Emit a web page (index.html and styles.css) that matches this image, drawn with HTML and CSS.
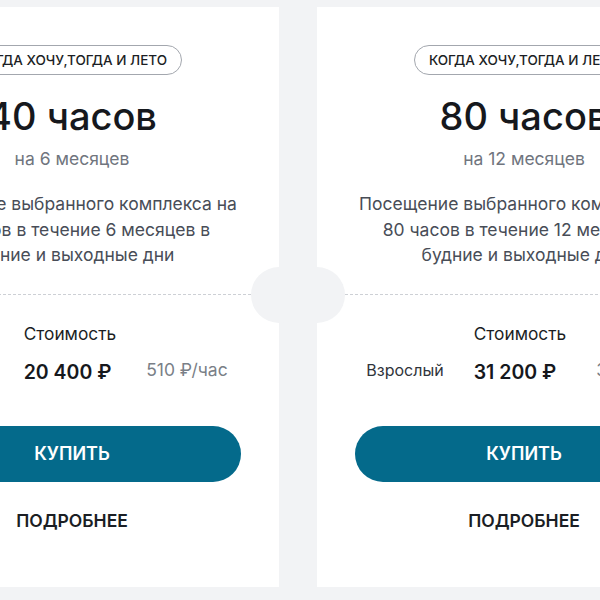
FILE: index.html
```html
<!DOCTYPE html>
<html lang="ru">
<head>
    <meta charset="UTF-8">
    <meta name="viewport" content="width=device-width, initial-scale=1.0">
    <title>Абонементы</title>
    <link rel="stylesheet" href="styles.css">
</head>
<body>

<div class="cards">

    <div class="card">
        <div class="badge">Когда хочу,тогда и лето</div>
        <h2 class="hours">40 часов</h2>
        <div class="period">на 6 месяцев</div>
        <p class="desc">Посещение выбранного комплекса на 40 часов в течение 6 месяцев в будние и выходные дни</p>
        <div class="divider"></div>
        <div class="prices">
            <span></span>
            <span class="prices-head">Стоимость</span>
            <span></span>
            <span class="who">Взрослый</span>
            <span class="sum">20 400 ₽</span>
            <span class="per-hour">510 ₽/час</span>
        </div>
        <button class="buy">Купить</button>
        <a class="more" href="#">Подробнее</a>
    </div>

    <div class="card">
        <div class="badge">Когда хочу,тогда и лето</div>
        <h2 class="hours">80 часов</h2>
        <div class="period">на 12 месяцев</div>
        <p class="desc">Посещение выбранного комплекса на 80 часов в течение 12 месяцев в будние и выходные дни</p>
        <div class="divider"></div>
        <div class="prices">
            <span></span>
            <span class="prices-head">Стоимость</span>
            <span></span>
            <span class="who">Взрослый</span>
            <span class="sum">31 200 ₽</span>
            <span class="per-hour">390 ₽/час</span>
        </div>
        <button class="buy">Купить</button>
        <a class="more" href="#">Подробнее</a>
    </div>

</div>

</body>
</html>
```

FILE: styles.css
```css
body {
    margin: 0;
    background: #f2f3f5;
    font-family: 'Inter', 'Noto Sans', sans-serif;
    color: #1b1e24;
    overflow: hidden;
}
.cards {
    display: flex;
    gap: 38px;
    padding-top: 7px;
    margin-left: -135px;
}
.card {
    flex: 0 0 414px;
    box-sizing: border-box;
    height: 580px;
    background: #fff;
    padding: 38px 38px 0;
    text-align: center;
}
.badge {
    display: inline-block;
    height: 30px;
    line-height: 28px;
    box-sizing: border-box;
    padding: 0 14px;
    border: 1px solid #a3a7ae;
    border-radius: 15px;
    font-size: 13.5px;
    font-weight: 500;
    text-transform: uppercase;
    color: #1b1e24;
}
.hours {
    margin: 18px 0 0;
    font-size: 38px;
    font-weight: 500;
    line-height: 46px;
    color: #16181d;
}
.period {
    margin-top: 10px;
    font-size: 17.5px;
    line-height: 20px;
    color: #70757e;
}
.desc {
    margin: 22px 0 0;
    font-size: 17.5px;
    line-height: 25.5px;
    color: #484d57;
}
.divider {
    position: relative;
    margin: 26px -10px 0;
    border-top: 1px dashed #cdd0d5;
}
.divider::before,
.divider::after {
    content: '';
    position: absolute;
    top: -28px;
    width: 56px;
    height: 56px;
    border-radius: 50%;
    background: #f2f3f5;
}
.divider::before {
    left: -56px;
}
.divider::after {
    right: -56px;
}
.prices {
    display: grid;
    grid-template-columns: auto auto auto;
    justify-content: center;
    align-items: center;
    column-gap: 30px;
    row-gap: 16px;
    margin-top: 29px;
    text-align: left;
}
.prices-head {
    font-size: 17.3px;
    line-height: 20px;
    color: #1b1e24;
}
.who {
    font-size: 16px;
    line-height: 20px;
    color: #30343b;
    margin-top: -3px;
}
.sum {
    font-size: 19.5px;
    line-height: 24px;
    font-weight: 600;
    color: #16181d;
}
.per-hour {
    font-size: 17.5px;
    line-height: 20px;
    color: #7a7f87;
    margin-top: -3px;
}
.buy {
    display: block;
    width: 100%;
    height: 56px;
    margin-top: 42px;
    border: none;
    border-radius: 28px;
    background: #046a8b;
    color: #fff;
    font-family: inherit;
    font-size: 18px;
    font-weight: 600;
    text-transform: uppercase;
    cursor: pointer;
}
.more {
    display: inline-block;
    margin-top: 29px;
    font-size: 17.5px;
    line-height: 20px;
    font-weight: 600;
    text-transform: uppercase;
    text-decoration: none;
    color: #1b1e24;
}
```
